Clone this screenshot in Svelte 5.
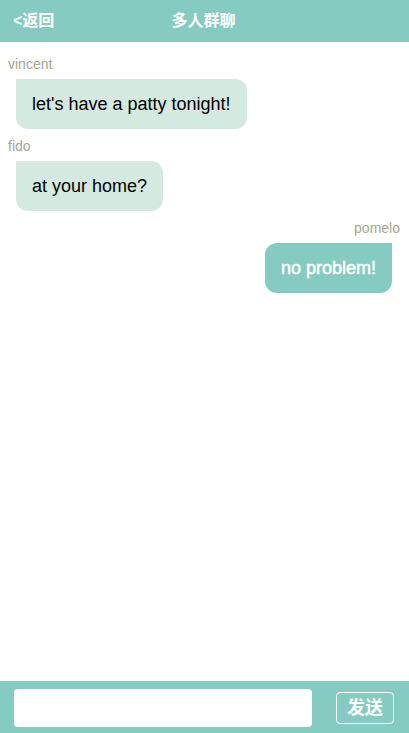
<script>
  let messages = $state([
    { name: 'vincent', text: "let's have a patty tonight!", own: false },
    { name: 'fido', text: 'at your home?', own: false },
    { name: 'pomelo', text: 'no problem!', own: true }
  ]);
  let draft = $state('');

  function send(event) {
    event.preventDefault();
    const text = draft.trim();
    if (!text) return;
    messages.push({ name: 'pomelo', text, own: true });
    draft = '';
  }
</script>

<div class="chat">
  <header>
    <a class="back" href="#back">&lt;返回</a>
    <h1>多人群聊</h1>
  </header>

  <main>
    {#each messages as message}
      <article class:own={message.own}>
        <span class="name">{message.name}</span>
        <p class="bubble">{message.text}</p>
      </article>
    {/each}
  </main>

  <form onsubmit={send}>
    <input type="text" aria-label="消息" autocomplete="off" bind:value={draft} />
    <button type="submit">发送</button>
  </form>
</div>

<style>
  .chat {
    display: flex;
    flex-direction: column;
    height: 100vh;
    background: #fff;
    color: #000;
    font-family: "Liberation Sans", "Noto Sans CJK SC", sans-serif;
  }

  header {
    flex: none;
    display: grid;
    grid-template-columns: 1fr auto 1fr;
    align-items: center;
    height: 42px;
    padding: 0 15px 0 13px;
    box-sizing: border-box;
    background: #86cbc1;
    color: #fff;
  }

  .back {
    color: inherit;
    font-size: 16px;
    font-weight: 700;
    line-height: 24px;
    text-decoration: none;
  }

  h1 {
    margin: 0;
    font-size: 16px;
    font-weight: 700;
    line-height: 24px;
  }

  main {
    flex: 1;
    min-height: 0;
    overflow-y: auto;
    padding-top: 14px;
  }

  article {
    display: flex;
    flex-direction: column;
    align-items: flex-start;
    padding: 0 9px 0 8px;
    margin-bottom: 8px;
  }

  .own {
    align-items: flex-end;
  }

  .name {
    margin-bottom: 7px;
    color: #a9a591;
    font-size: 14px;
    line-height: 16px;
  }

  .bubble {
    margin: 0 8px 1px;
    padding: 15px 16px;
    border-radius: 0 12px 12px 12px;
    background: #d4e9e0;
    font-size: 18px;
    line-height: 20px;
  }

  .own .bubble {
    border-radius: 12px 0 12px 12px;
    background: #86cbc1;
    color: #fff;
    -webkit-text-stroke: 0.5px #fff;
  }

  form {
    flex: none;
    display: flex;
    align-items: center;
    gap: 24px;
    height: 52px;
    padding: 2px 15px 0 14px;
    box-sizing: border-box;
    background: #86cbc1;
  }

  input {
    flex: 1;
    min-width: 0;
    height: 38px;
    padding: 0 8px;
    box-sizing: border-box;
    border: 0;
    border-radius: 4px;
    background: #fff;
    font: inherit;
    font-size: 18px;
  }

  button {
    width: 58px;
    height: 32px;
    padding: 0;
    box-sizing: border-box;
    border: 1px solid #fff;
    border-radius: 4px;
    background: transparent;
    color: #fff;
    font-family: inherit;
    font-size: 18px;
    font-weight: 700;
    line-height: 30px;
    cursor: pointer;
  }
</style>
